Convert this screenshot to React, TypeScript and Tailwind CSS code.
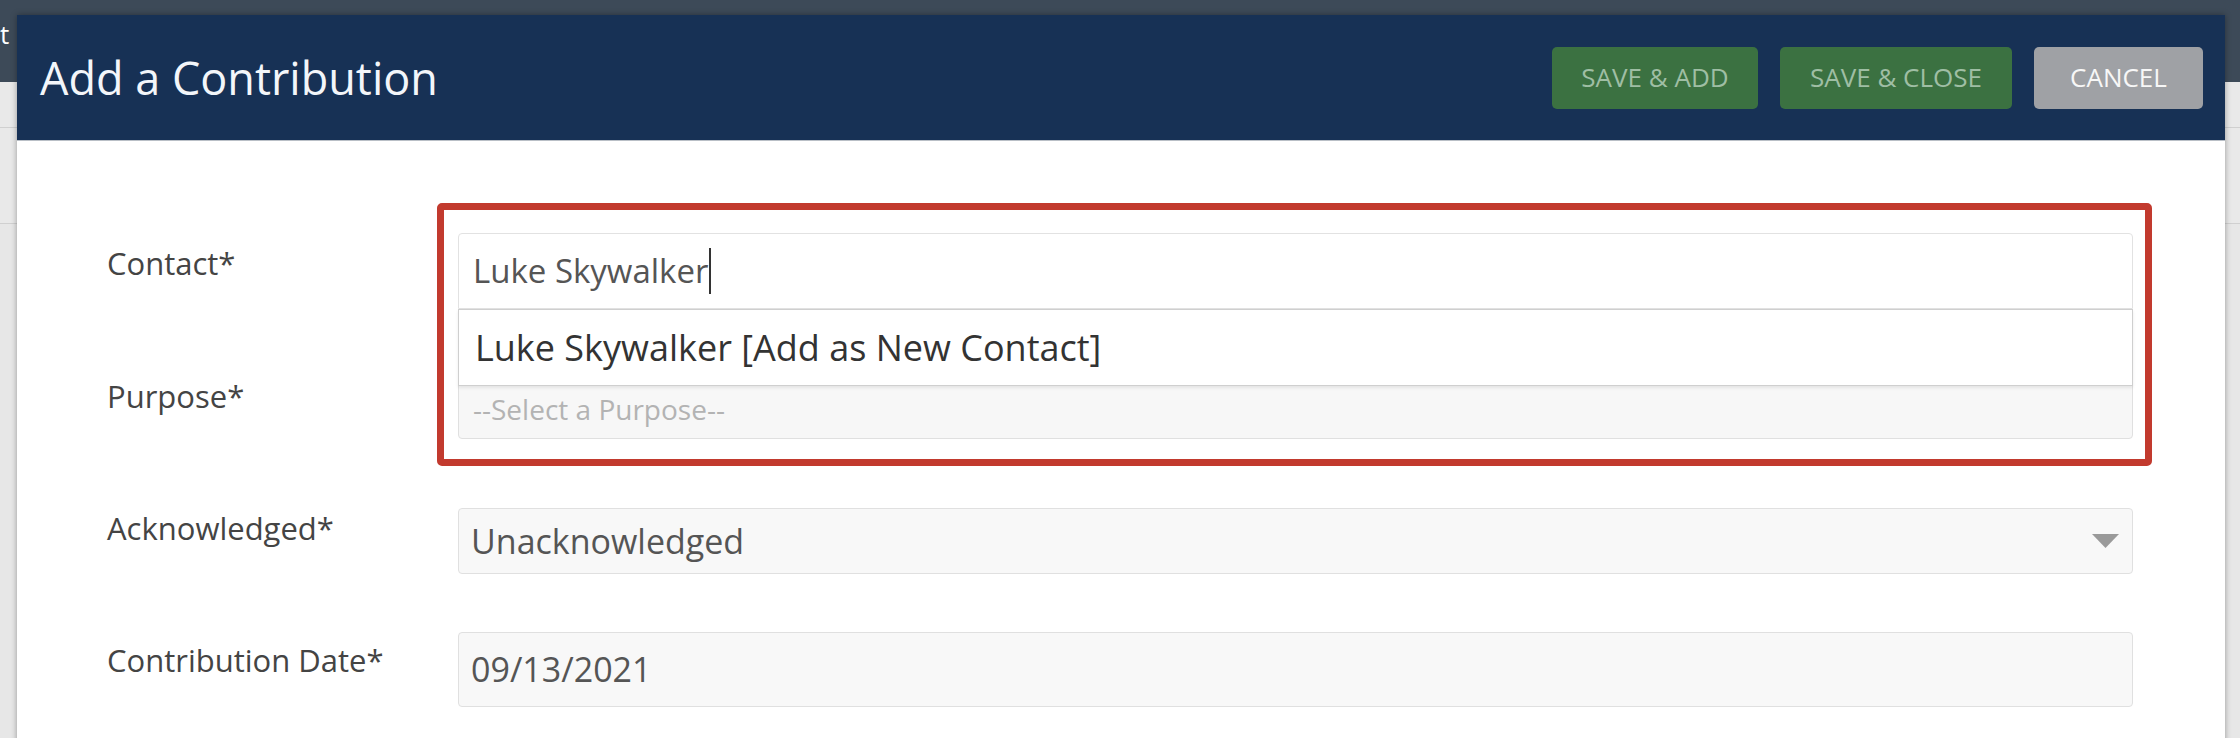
export default function App() {
  return (
    <div className="relative h-[738px] w-[2240px] overflow-hidden bg-[#e7e7e7] font-['Open_Sans',sans-serif]">
      {/* page behind the modal */}
      <div className="flex h-[82px] items-start bg-[#3d4a58] pt-[18px]">
        <span className="text-[26px] leading-[32px] text-white">t</span>
      </div>
      <div className="h-[46px] border-b border-[#d0d0d0] bg-[#e9e9e9]" />
      <div className="h-[96px] border-b border-[#d0d0d0] bg-[#e9e9e9]" />

      {/* modal */}
      <div className="absolute left-[17px] top-[15px] h-[760px] w-[2208px] bg-white shadow-[0_0_6px_rgba(0,0,0,0.35)]">
        <div className="flex h-[126px] items-center justify-between border-b border-[#b9bfc6] bg-[#173155] pl-[23px] pr-[22px]">
          <h2 className="text-[45px] leading-none text-[#f3f6fa]">Add a Contribution</h2>
          <div className="flex gap-[22px]">
            <button className="flex h-[62px] w-[206px] items-center justify-center rounded-[5px] bg-[#3b7141] text-[26px] text-[#9fbea4]">
              SAVE &amp; ADD
            </button>
            <button className="flex h-[62px] w-[232px] items-center justify-center rounded-[5px] bg-[#3b7141] text-[26px] text-[#9fbea4]">
              SAVE &amp; CLOSE
            </button>
            <button className="flex h-[62px] w-[169px] items-center justify-center rounded-[5px] bg-[#9fa1a5] text-[26px] text-[#f7f7f7]">
              CANCEL
            </button>
          </div>
        </div>

        <div className="pl-[90px] pr-[92px] pt-[92px]">
          {/* Contact */}
          <div className="flex items-start">
            <div className="w-[351px] pt-[10px] text-[31px] leading-[40px] text-[#444]">Contact*</div>
            <div className="relative flex-1">
              <div className="flex h-[76px] items-center rounded-t-[4px] border border-[#e2e2e2] bg-white pl-[14px] text-[33px] text-[#555]">
                Luke Skywalker
                <span className="ml-[1px] inline-block h-[46px] w-[2px] bg-[#333]" />
              </div>
              <div className="absolute left-0 right-0 top-full z-10 flex h-[77px] items-center border border-[#cfcfcf] bg-white pl-[16px] text-[36px] text-[#333] shadow-[0_2px_3px_rgba(0,0,0,0.08)]">
                Luke Skywalker [Add as New Contact]
              </div>
            </div>
          </div>

          {/* Purpose */}
          <div className="mt-[64px] flex items-start">
            <div className="w-[351px] pt-[3px] text-[31px] leading-[40px] text-[#444]">Purpose*</div>
            <div className="flex h-[66px] flex-1 items-center rounded-[4px] border border-[#e0e0e0] bg-[#f7f7f7] pl-[14px] pt-[6px] text-[28px] text-[#b3b3b3]">
              --Select a Purpose--
            </div>
          </div>

          {/* Acknowledged */}
          <div className="mt-[69px] flex items-start">
            <div className="w-[351px] text-[31px] leading-[40px] text-[#444]">Acknowledged*</div>
            <div className="flex h-[66px] flex-1 items-center justify-between rounded-[4px] border border-[#e0e0e0] bg-[#f8f8f8] pl-[12px] pr-[13px] text-[34px] text-[#555]">
              Unacknowledged
              <svg width="27" height="14" viewBox="0 0 27 14">
                <polygon points="0,0 27,0 13.5,14" fill="#9a9a9a" />
              </svg>
            </div>
          </div>

          {/* Contribution Date */}
          <div className="mt-[58px] flex items-start">
            <div className="w-[351px] pt-[8px] text-[31px] leading-[40px] text-[#444]">Contribution Date*</div>
            <div className="flex h-[75px] flex-1 items-center rounded-[4px] border border-[#e0e0e0] bg-[#f8f8f8] pl-[12px] text-[34px] text-[#555]">
              09/13/2021
            </div>
          </div>
        </div>

        {/* red annotation box */}
        <div className="pointer-events-none absolute left-[420px] top-[188px] z-20 h-[263px] w-[1715px] rounded-[5px] border-[7px] border-[#c23a2e]" />
      </div>
    </div>
  );
}
